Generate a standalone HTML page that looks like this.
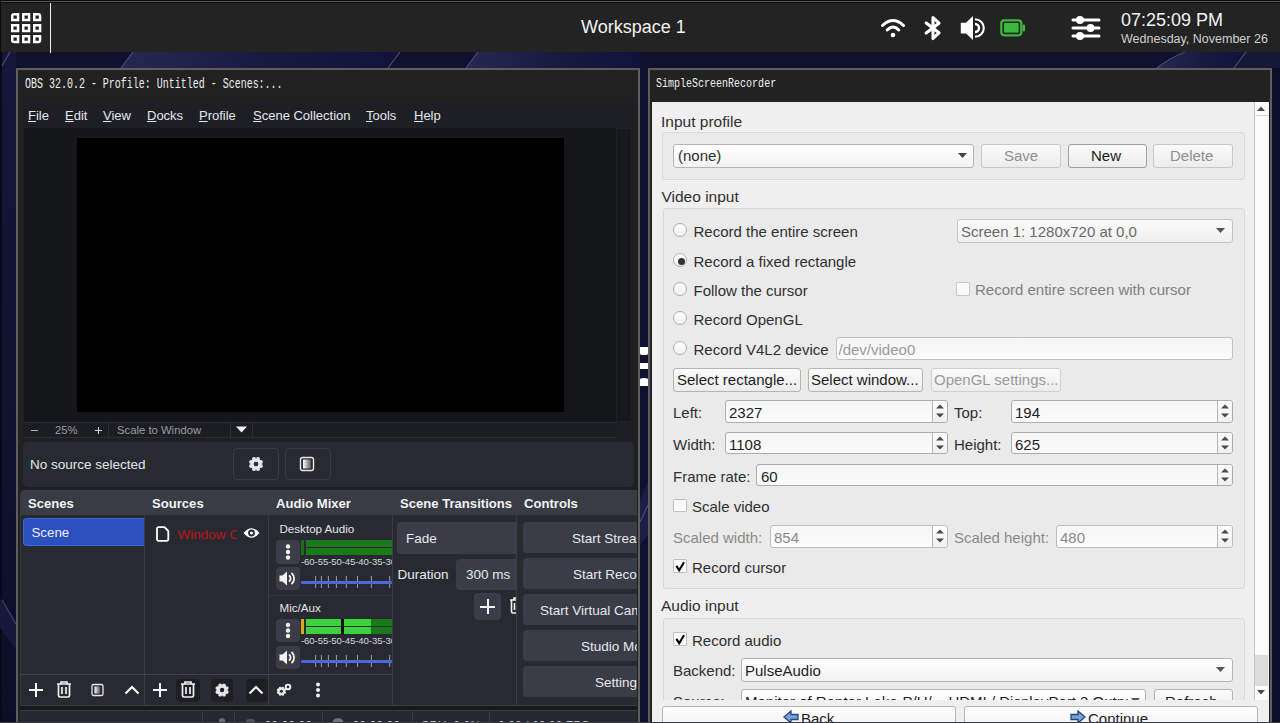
<!DOCTYPE html>
<html><head><meta charset="utf-8">
<style>
*{box-sizing:border-box;margin:0;padding:0}
html,body{width:1280px;height:723px;overflow:hidden}
body{position:relative;background:#11122f;font-family:"Liberation Sans",sans-serif;}
.a{position:absolute}
.t{position:absolute;white-space:nowrap;line-height:1}
/* top bar */
#topbar{left:0;top:0;width:1280px;height:52px;background:#232323;border-top:1px solid #0a0a0a}
/* windows */
.win{position:absolute;background:#5c5c5c}
.ttl{position:absolute;background:#222222;font-family:"Liberation Mono",monospace;color:#f0f0f0}
/* OBS */
.obs{color:#e8e8ea}
.btn{position:absolute;background:#3b3d48;border-radius:4px}
/* SSR */
.ssr{color:#303030;font-family:"Liberation Sans",sans-serif}
.grp{position:absolute;background:#eaeaea;border:1px solid #d8d8d8;border-radius:3px}
.fld{position:absolute;background:linear-gradient(#f6f6f6,#fbfbfb);border:1px solid #adadad;border-radius:3px}
.pb{position:absolute;background:linear-gradient(#fbfbfb,#ececec);border:1px solid #b4b4b4;border-radius:3px}
.rad{position:absolute;width:14px;height:14px;border-radius:50%;border:1px solid #b0b0b0;background:linear-gradient(#fdfdfd,#f0f0f0)}
.cb{position:absolute;width:14px;height:13.5px;border:1px solid #c0c0c0;background:#fafafa;border-radius:1px}
.ck{position:absolute;left:1px;top:-3px;font-size:14px;font-weight:bold;color:#111;line-height:1}
.spn{position:absolute;background:linear-gradient(#f6f6f6,#fbfbfb);border:1px solid #adadad;border-radius:3px}
.spn::after{content:"";position:absolute;right:0;top:0;width:14px;height:100%;border-left:1px solid #b8b8b8;background:linear-gradient(#fdfdfd,#f0f0f0);border-radius:0 3px 3px 0;z-index:0}
.spn svg{z-index:1}
</style></head>
<body>
<!-- desktop background streaks -->
<svg class="a" style="left:0;top:0" width="1280" height="723">
  <defs>
    <linearGradient id="pg" x1="0" x2="1" y1="0" y2="0">
      <stop offset="0" stop-color="#262852"/><stop offset="0.5" stop-color="#191a40"/><stop offset="1" stop-color="#12133a"/>
    </linearGradient>
    <linearGradient id="lg" x1="0" x2="0" y1="0" y2="1">
      <stop offset="0" stop-color="#16173a"/><stop offset="0.6" stop-color="#10112e"/><stop offset="1" stop-color="#0c0d26"/>
    </linearGradient>
  </defs>
  <rect x="0" y="0" width="1280" height="723" fill="#10112e"/>
  <rect x="0" y="52" width="16" height="671" fill="url(#lg)"/>
  <rect x="0" y="52" width="2" height="671" fill="#07081a"/>
  <polygon points="133,52 400,52 388,68 121,68" fill="url(#pg)"/>
  <polygon points="478,52 640,52 640,68 466,68" fill="url(#pg)"/>
  <polygon points="1185,52 1246,52 1234,68 1157,68" fill="url(#pg)"/>
  <polygon points="1246,52 1280,52 1280,68 1234,68" fill="#161838"/>
  <path d="M133,52L121,68M400,52L388,68M478,52L466,68M1185,52Q1170,58 1157,68M1246,52L1234,68M10,52L2,66" stroke="#4a4c7a" stroke-width="1.2" fill="none"/>
  <polygon points="0,598 16,624 16,650 0,628" fill="#17183c"/>
  <path d="M2,600L16,624" stroke="#3e406c" stroke-width="1.3"/>
  <polygon points="640,500 648,482 648,535 640,545" fill="#1c1d45"/>
  <path d="M640,522L648,505" stroke="#45477a" stroke-width="1.3"/>
  <rect x="1272" y="68" width="8" height="655" fill="#0d0e28"/>
</svg>
<!-- resize handle -->
<!-- TOP BAR -->
<div id="topbar" class="a" style="border:none">
  <div class="a" style="left:0;top:0;width:1280px;height:1px;background:#0a0a0a"></div>
  <div class="a" style="left:0;top:1px;width:1280px;height:1px;background:#585858"></div>
  <div class="a" style="left:0;top:2px;width:1280px;height:1px;background:#0a0a0a"></div>
  <div class="a" style="left:0;top:0;width:1px;height:52px;background:#0a0a0a"></div>
  <svg class="a" style="left:10px;top:12px" width="33" height="33" viewBox="0 0 33 33"><g fill="#fff"><path d="M4.3,1H9.3V9.3H1V4.3A3.3,3.3 0 0 1 4.3,1ZM3.5,3.5h3.3v3.3h-3.3z" fill-rule="evenodd"/><path d="M12,1H20.3V9.3H12V1ZM14.5,3.5h3.3v3.3h-3.3z" fill-rule="evenodd"/><path d="M23,1H28.0A3.3,3.3 0 0 1 31.3,4.3V9.3H23V1ZM25.5,3.5h3.3v3.3h-3.3z" fill-rule="evenodd"/><path d="M1,12H9.3V20.3H1V12ZM3.5,14.5h3.3v3.3h-3.3z" fill-rule="evenodd"/><path d="M12,12H20.3V20.3H12V12ZM14.5,14.5h3.3v3.3h-3.3z" fill-rule="evenodd"/><path d="M23,12H31.3V20.3H23V12ZM25.5,14.5h3.3v3.3h-3.3z" fill-rule="evenodd"/><path d="M1,23H9.3V31.3H4.3A3.3,3.3 0 0 1 1,28.0V23ZM3.5,25.5h3.3v3.3h-3.3z" fill-rule="evenodd"/><path d="M12,23H20.3V31.3H12V23ZM14.5,25.5h3.3v3.3h-3.3z" fill-rule="evenodd"/><path d="M23,23H31.3V28.0A3.3,3.3 0 0 1 28.0,31.3H23V23ZM25.5,25.5h3.3v3.3h-3.3z" fill-rule="evenodd"/></g></svg>
  <div class="a" style="left:50px;top:3px;width:1px;height:50px;background:#f0f0f0"></div>
  <div class="t" id="ws" style="left:581px;top:18px;font-size:18px;color:#f2f2f2">Workspace 1</div>
  <!-- wifi -->
  <svg class="a" style="left:880px;top:17px" width="27" height="21" viewBox="0 0 27 21">
    <g fill="none" stroke="#fff" stroke-width="3" stroke-linecap="round">
      <path d="M2.5,8.5 Q13,-1.5 23.5,8.5"/>
      <path d="M7.2,13 Q13,7 18.8,13"/>
    </g>
    <circle cx="13" cy="18" r="2.3" fill="#fff"/>
  </svg>
  <!-- bluetooth -->
  <svg class="a" style="left:923px;top:15px" width="20" height="26" viewBox="0 0 20 26">
    <path d="M3.2,8 L16,17.8 L10,23.5 L10,2.5 L16,8.2 L3.2,18" fill="none" stroke="#fff" stroke-width="3.1" stroke-linecap="round" stroke-linejoin="round"/>
  </svg>
  <!-- speaker -->
  <svg class="a" style="left:959px;top:15px" width="28" height="26" viewBox="0 0 28 26">
    <path d="M1.8,7.7 H7 L14,1 V25 L7,18.4 H1.8 Z" fill="#fff"/>
    <path d="M16,9 A4,4 0 0 1 16,17" fill="none" stroke="#fff" stroke-width="2.4"/>
    <path d="M16,4.2 A8.8,8.8 0 0 1 16,21.8" fill="none" stroke="#fff" stroke-width="2.1"/>
  </svg>
  <!-- battery -->
  <svg class="a" style="left:1000px;top:19px" width="26" height="18" viewBox="0 0 26 18">
    <rect x="1.3" y="1.3" width="20" height="15" rx="3" fill="none" stroke="#3cb83c" stroke-width="2.2"/>
    <rect x="4" y="4" width="14.6" height="9.6" fill="#3cb83c"/>
    <rect x="22.5" y="5.5" width="2.5" height="7" rx="1" fill="#3cb83c"/>
  </svg>
  <!-- sliders -->
  <svg class="a" style="left:1071px;top:15px" width="30" height="26" viewBox="0 0 30 26">
    <g stroke="#fff" stroke-width="3" stroke-linecap="round">
      <path d="M2,5 H28"/><path d="M2,13 H28"/><path d="M2,21 H28"/>
    </g>
    <g fill="#fff"><circle cx="9" cy="5" r="4"/><circle cx="19.5" cy="13" r="4"/><circle cx="9" cy="21" r="4"/></g>
  </svg>
  <div class="t" id="clk" style="left:1121px;top:11px;font-size:18px;color:#f2f2f2">07:25:09 PM</div>
  <div class="t" id="dt" style="left:1121px;top:33px;font-size:12.5px;color:#cfcfcf">Wednesday, November 26</div>
</div>
<!-- OBS WINDOW -->
<div class="a" style="left:16px;top:68px;width:624px;height:660px;background:#5e5e5e"></div>
<div class="a" style="left:18px;top:70px;width:620px;height:655px;background:#212121"></div>
<div class="t" id="obst" style="left:25px;top:77px;font-family:'Liberation Mono',monospace;font-size:14px;color:#f0f0f0;transform:scaleX(0.713);transform-origin:0 0">OBS 32.0.2 - Profile: Untitled - Scenes:...</div>
<div class="a" style="left:23px;top:97px;width:614px;height:31px;background:linear-gradient(#212121,#1d1f25 30%,#1d1f25)"></div>
<div class="obs" id="menu" style="position:absolute;left:0;top:0;font-size:13px;color:#e6e6ea">
  <div class="t" style="left:28px;top:109px"><u>F</u>ile</div>
  <div class="t" style="left:65px;top:109px"><u>E</u>dit</div>
  <div class="t" style="left:103px;top:109px"><u>V</u>iew</div>
  <div class="t" style="left:147px;top:109px"><u>D</u>ocks</div>
  <div class="t" style="left:199px;top:109px"><u>P</u>rofile</div>
  <div class="t" style="left:253px;top:109px"><u>S</u>cene Collection</div>
  <div class="t" style="left:366px;top:109px"><u>T</u>ools</div>
  <div class="t" style="left:414px;top:109px"><u>H</u>elp</div>
</div>
<!-- preview -->
<div class="a" style="left:24px;top:128px;width:592px;height:294px;background:#16171b"></div>
<div class="a" style="left:77px;top:138px;width:487px;height:274px;background:#000"></div>
<div class="a" style="left:616px;top:128px;width:16px;height:294px;background:#18191f;border:1px solid #1f2128"></div>
<div class="a" style="left:632px;top:128px;width:5px;height:362px;background:#1d1f25"></div>
<!-- zoom bar -->
<div class="a" style="left:23px;top:422px;width:614px;height:68px;background:#1d1f25"></div>
<div class="a" style="left:23px;top:422px;width:593px;height:16px;background:#1c1d23;border-top:1px solid #2a2b33;border-bottom:1px solid #2a2b33"></div>

<div class="a" style="left:108px;top:422px;width:1px;height:16px;background:#2c2d35"></div>
<div class="a" style="left:230px;top:422px;width:1px;height:16px;background:#2c2d35"></div>
<div class="a" style="left:252px;top:422px;width:1px;height:16px;background:#2c2d35"></div>
<div class="obs" style="position:absolute;left:0;top:0;font-size:11.3px;color:#9a9ba2">
  <div class="a" style="left:30.5px;top:429.5px;width:7px;height:1.3px;background:#b0b1b8"></div>
  <div class="t" style="left:55px;top:425px">25%</div>
  <div class="a" style="left:94.5px;top:429.5px;width:7.5px;height:1.4px;background:#d0d1d6"></div>
  <div class="a" style="left:97.5px;top:426.5px;width:1.4px;height:7.5px;background:#d0d1d6"></div>
  <div class="t" style="left:117px;top:425px">Scale to Window</div>
  <svg class="a" style="left:236px;top:426px" width="11" height="7"><path d="M0,0.5 H11 L5.5,6.5Z" fill="#f0f0f0"/></svg>
</div>
<!-- context bar -->
<div class="a" style="left:23px;top:442px;width:611px;height:45px;background:#272a31;border-radius:5px"></div>
<div class="t" style="left:30px;top:458px;font-size:13.5px;color:#e4e4e8">No source selected</div>
<div class="a" style="left:233px;top:448px;width:46px;height:32px;border:1px solid #3a3c45;border-radius:4px;background:#272a31"></div>
<div class="a" style="left:285px;top:448px;width:46px;height:32px;border:1px solid #3a3c45;border-radius:4px;background:#272a31"></div>
<svg class="a" style="left:0;top:0" width="0" height="0"><defs><g id="gearp"><path d="M0,0" fill="none"/><g fill="#e4e4ea"><circle cx="9" cy="9" r="5.6"/><circle cx="13.90" cy="11.03" r="2"/><circle cx="11.03" cy="13.90" r="2"/><circle cx="6.97" cy="13.90" r="2"/><circle cx="4.10" cy="11.03" r="2"/><circle cx="4.10" cy="6.97" r="2"/><circle cx="6.97" cy="4.10" r="2"/><circle cx="11.03" cy="4.10" r="2"/><circle cx="13.90" cy="6.97" r="2"/></g></g></defs></svg>
<svg class="a" style="left:247px;top:455px" width="18" height="18" viewBox="0 0 18 18">
  <use href="#gearp"/>
  <circle cx="9" cy="9" r="2.3" fill="#272a31"/>
</svg>
<svg class="a" style="left:299px;top:456px" width="16" height="16" viewBox="0 0 16 16">
  <defs><linearGradient id="fg" x1="0" x2="1"><stop offset="0" stop-color="#fff"/><stop offset="1" stop-color="#555"/></linearGradient></defs>
  <rect x="1.5" y="1.5" width="13" height="13" rx="2" fill="none" stroke="#e8e8ea" stroke-width="1.4"/>
  <rect x="4" y="3.5" width="8" height="9" fill="url(#fg)"/>
</svg>
<!-- DOCKS -->
<div class="a" style="left:20px;top:490px;width:617px;height:233px;overflow:hidden">
  <div class="a" style="left:0;top:0;width:617px;height:25px;background:#393b45;border-radius:5px 0 0 0"></div>
  <div class="a" style="left:0;top:25px;width:617px;height:190px;background:#282a32"></div>
  <div class="a" style="left:0;top:25px;width:1px;height:190px;background:#34363f"></div>
  <div class="t" style="left:8px;top:7px;font-size:13.1px;font-weight:bold;color:#f2f2f4">Scenes</div>
  <div class="t" style="left:132px;top:7px;font-size:13.1px;font-weight:bold;color:#f2f2f4">Sources</div>
  <div class="t" style="left:256px;top:7px;font-size:13.1px;font-weight:bold;color:#f2f2f4">Audio Mixer</div>
  <div class="t" style="left:380px;top:7px;font-size:13.1px;font-weight:bold;color:#f2f2f4">Scene Transitions</div>
  <div class="t" style="left:504px;top:7px;font-size:13.1px;font-weight:bold;color:#f2f2f4">Controls</div>
  <!-- dividers -->
  <div class="a" style="left:124px;top:25px;width:1px;height:190px;background:#3a3c46"></div>
  <div class="a" style="left:248px;top:25px;width:1px;height:190px;background:#3a3c46"></div>
  <div class="a" style="left:372px;top:25px;width:1px;height:190px;background:#3a3c46"></div>
  <div class="a" style="left:496px;top:25px;width:1px;height:190px;background:#3a3c46"></div>
  <div class="a" style="left:0;top:184px;width:372px;height:1px;background:#33353d"></div>
  <div class="a" style="left:0;top:215px;width:617px;height:1px;background:#3a3c45"></div>
  <div class="a" style="left:0;top:216px;width:617px;height:4px;background:#17181c"></div>
  <div class="a" style="left:0;top:220px;width:617px;height:13px;background:#272930;border-top:1px solid #3a3c45"></div>
  <div class="a" style="left:182px;top:221px;width:1px;height:12px;background:#3a3c45"></div>
  <div class="a" style="left:214px;top:221px;width:1px;height:12px;background:#3a3c45"></div>
  <div class="a" style="left:302px;top:221px;width:1px;height:12px;background:#3a3c45"></div>
  <div class="a" style="left:392px;top:221px;width:1px;height:12px;background:#3a3c45"></div>
  <div class="a" style="left:469px;top:221px;width:1px;height:12px;background:#3a3c45"></div>
  <div class="a" style="left:199px;top:228px;width:6px;height:6px;background:#6a6c74;border-radius:3px 3px 0 0"></div>
  <div class="a" style="left:226px;top:229px;width:9px;height:5px;background:#50525a;border-radius:3px 3px 0 0"></div>
  <div class="t" style="left:244.6px;top:230px;font-size:12.2px;color:#c0c0c6">00:00:00</div>
  <div class="a" style="left:312px;top:228px;width:11.5px;height:7px;background:#70727a;border-radius:6px 6px 0 0"></div>
  <div class="t" style="left:332.6px;top:230px;font-size:12.2px;color:#c0c0c6">00:00:00</div>
  <div class="t" style="left:400.8px;top:230px;font-size:12.2px;color:#c0c0c6">CPU: 0.0%</div>
  <div class="t" style="left:478px;top:230px;font-size:12.2px;color:#c0c0c6">0.00 / 60.00 FPS</div>

  <!-- scenes list -->
  <div class="a" style="left:3px;top:28px;width:121px;height:28px;background:#2b4fbf;border-radius:4px 0 0 4px;border:1px solid #4266d4;border-right:none"></div>
  <div class="t" style="left:11.5px;top:36px;font-size:13.3px;color:#eef0ff">Scene</div>
  <!-- sources -->
  <svg class="a" style="left:136px;top:36px" width="14" height="16" viewBox="0 0 14 16">
    <path d="M2.5,1.2 H8.5 L12.3,5 V13.3 A1.5,1.5 0 0 1 10.8,14.8 H2.5 A1.5,1.5 0 0 1 1,13.3 V2.7 A1.5,1.5 0 0 1 2.5,1.2Z" fill="none" stroke="#fff" stroke-width="1.8" stroke-linejoin="round"/>
  </svg>
  <div class="t" style="left:157.5px;top:38px;font-size:13.5px;color:#b8141a;width:59px;overflow:hidden">Window Capture</div>
  <svg class="a" style="left:223px;top:37px" width="17" height="12" viewBox="0 0 17 12">
    <path d="M0.5,6 Q8.5,-3.5 16.5,6 Q8.5,15.5 0.5,6Z" fill="#fff"/>
    <circle cx="8.5" cy="6" r="3.4" fill="#272930"/><circle cx="8.5" cy="6" r="1.6" fill="#fff"/>
  </svg>
  <!-- audio mixer (clipped) -->
  <div class="a" style="left:249px;top:25px;width:123px;height:190px;overflow:hidden">
    <div class="a" style="left:-249px;top:-25px;width:617px;height:233px">
  <div class="t" style="left:259.5px;top:33px;font-size:11.6px;color:#e4e4e8">Desktop Audio</div>
  <div class="a" style="left:256px;top:50px;width:24px;height:24px;background:#3a3c47;border-radius:4px"></div>
  <div class="a" style="left:256px;top:77px;width:24px;height:23px;background:#3a3c47;border-radius:4px"></div>
  <div class="a" style="left:281px;top:50px;width:3px;height:15px;background:#1c6e1c"></div>
  <div class="a" style="left:286px;top:50px;width:86px;height:7px;background:#1a7a1a"></div>
  <div class="a" style="left:286px;top:58px;width:86px;height:7px;background:#1a7a1a"></div>
  <div class="t" style="left:281px;top:67px;font-size:9.6px;color:#d8d8dc;letter-spacing:-0.1px">-60-55-50-45-40-35-30</div>
  <div class="a" style="left:281px;top:90.5px;width:91px;height:3.5px;background:#4a69d8;border-radius:2px"></div>
  <div class="a" style="left:249px;top:105px;width:123px;height:1px;background:#33353d"></div>
  <div class="t" style="left:259.5px;top:112px;font-size:11.6px;color:#e4e4e8">Mic/Aux</div>
  <div class="a" style="left:256px;top:129px;width:24px;height:23px;background:#3a3c47;border-radius:4px"></div>
  <div class="a" style="left:256px;top:156px;width:24px;height:23px;background:#3a3c47;border-radius:4px"></div>
  <div class="a" style="left:281px;top:128.5px;width:3px;height:15.5px;background:#e0a424"></div>
  <div class="a" style="left:285.5px;top:128.5px;width:35.5px;height:7px;background:#3ad43a"></div>
  <div class="a" style="left:285.5px;top:136.5px;width:35.5px;height:7.5px;background:#3ad43a"></div>
  <div class="a" style="left:323.5px;top:128.5px;width:27.5px;height:7px;background:#3ad43a"></div>
  <div class="a" style="left:323.5px;top:136.5px;width:27.5px;height:7.5px;background:#3ad43a"></div>
  <div class="a" style="left:321px;top:128.5px;width:2.5px;height:15.5px;background:#0a0a0a"></div>
  <div class="a" style="left:351px;top:128.5px;width:21px;height:7px;background:#1a7a1a"></div>
  <div class="a" style="left:351px;top:136.5px;width:21px;height:7.5px;background:#1a7a1a"></div>
  <div class="t" style="left:281px;top:146px;font-size:9.6px;color:#d8d8dc;letter-spacing:-0.1px">-60-55-50-45-40-35-30</div>
  <div class="a" style="left:281px;top:169.5px;width:91px;height:3.5px;background:#4a69d8;border-radius:2px"></div>
  <svg class="a" style="left:281px;top:86px" width="91" height="12"><g stroke="#9a9ca6" stroke-width="1"><path d="M14.6,0V12M20.4,0V12M27.4,0V12M35.4,0V12M45.3,0V12M56.5,0V12M70.4,0V12M88.7,0V12"/></g></svg>
  <svg class="a" style="left:281px;top:165px" width="91" height="12"><g stroke="#9a9ca6" stroke-width="1"><path d="M14.6,0V12M20.4,0V12M27.4,0V12M35.4,0V12M45.3,0V12M56.5,0V12M70.4,0V12M88.7,0V12"/></g></svg>
  <div class="a" style="left:281px;top:90.5px;width:91px;height:3.5px;background:#4a69d8;border-radius:2px"></div>
  <div class="a" style="left:281px;top:169.5px;width:91px;height:3.5px;background:#4a69d8;border-radius:2px"></div>
  <svg class="a" style="left:256px;top:50px" width="24" height="24"><g fill="#f0f0f0"><circle cx="12" cy="6.5" r="2.2"/><circle cx="12" cy="12" r="2.2"/><circle cx="12" cy="17.5" r="2.2"/></g></svg>
  <svg class="a" style="left:256px;top:129px" width="24" height="23"><g fill="#f0f0f0"><circle cx="12" cy="6" r="2.2"/><circle cx="12" cy="11.5" r="2.2"/><circle cx="12" cy="17" r="2.2"/></g></svg>
  <svg class="a" style="left:256px;top:77px" width="24" height="23" viewBox="0 0 24 23"><path d="M3.5,8.5H6.5L11,4.5V18.5L6.5,14.5H3.5Z" fill="#f4f4f4"/><path d="M13.5,9A3.5,3.5 0 0 1 13.5,14M16,6.5A7,7 0 0 1 16,16.5" fill="none" stroke="#f4f4f4" stroke-width="1.8" stroke-linecap="round"/></svg>
  <svg class="a" style="left:256px;top:156px" width="24" height="23" viewBox="0 0 24 23"><path d="M3.5,8.5H6.5L11,4.5V18.5L6.5,14.5H3.5Z" fill="#f4f4f4"/><path d="M13.5,9A3.5,3.5 0 0 1 13.5,14M16,6.5A7,7 0 0 1 16,16.5" fill="none" stroke="#f4f4f4" stroke-width="1.8" stroke-linecap="round"/></svg>
    </div>
  </div>
  <!-- transitions (clipped) -->
  <div class="a" style="left:373px;top:25px;width:123px;height:190px;overflow:hidden">
    <div class="a" style="left:-373px;top:-25px;width:617px;height:233px">
  <div class="a" style="left:377px;top:32px;width:130px;height:32px;background:#3a3c47;border-radius:4px"></div>
  <div class="t" style="left:386px;top:42px;font-size:13.5px;color:#e8e8ec">Fade</div>
  <div class="t" style="left:377.5px;top:78px;font-size:13.5px;color:#e8e8ec">Duration</div>
  <div class="a" style="left:435.5px;top:68.5px;width:70px;height:31.5px;background:#3a3c47;border-radius:4px"></div>
  <div class="t" style="left:446px;top:78px;font-size:13.5px;color:#e8e8ec">300 ms</div>
  <div class="a" style="left:454px;top:102.5px;width:26.5px;height:27.5px;background:#3a3c47;border-radius:4px"></div>
  <div class="a" style="left:460px;top:115.5px;width:15px;height:2px;background:#f4f4f4"></div>
  <div class="a" style="left:466.5px;top:109px;width:2px;height:15px;background:#f4f4f4"></div>
  <svg class="a" style="left:489px;top:107px" width="14" height="17" viewBox="0 0 14 17"><path d="M1,3H13M5,3V1H9V3M2.5,3.5V14.5A1.5,1.5 0 0 0 4,16H10A1.5,1.5 0 0 0 11.5,14.5V3.5M5.5,6V13M8.5,6V13" fill="none" stroke="#f0f0f0" stroke-width="1.6"/></svg>
    </div>
  </div>
  <!-- controls (clipped) -->
  <div class="a" style="left:497px;top:25px;width:120px;height:190px;overflow:hidden">
    <div class="a" style="left:-497px;top:-25px;width:617px;height:233px">
  <div class="a" style="left:503px;top:32.4px;width:140px;height:31px;background:#3a3c47;border-radius:4px"></div>
  <div class="a" style="left:503px;top:68px;width:140px;height:31px;background:#3a3c47;border-radius:4px"></div>
  <div class="a" style="left:503px;top:104px;width:140px;height:31px;background:#3a3c47;border-radius:4px"></div>
  <div class="a" style="left:503px;top:140px;width:140px;height:31px;background:#3a3c47;border-radius:4px"></div>
  <div class="a" style="left:503px;top:176px;width:140px;height:31px;background:#3a3c47;border-radius:4px"></div>
  <div class="t" style="left:552px;top:42px;font-size:13.5px;color:#e8e8ec">Start Streaming</div>
  <div class="t" style="left:553px;top:78px;font-size:13.5px;color:#e8e8ec">Start Recording</div>
  <div class="t" style="left:520px;top:114px;font-size:13.5px;color:#e8e8ec">Start Virtual Camera</div>
  <div class="t" style="left:561px;top:150px;font-size:13.5px;color:#e8e8ec">Studio Mode</div>
  <div class="t" style="left:575px;top:186px;font-size:13.5px;color:#e8e8ec">Settings</div>
    </div>
  </div>
  <!-- toolbars -->
  <div class="a" style="left:0;top:184px;width:372px;height:1px;background:#40424c"></div>

  <svg class="a" style="left:0;top:185px" width="372" height="30" viewBox="0 0 372 30">
    <g stroke="#f4f4f4" stroke-width="2" fill="none">
      <path d="M9,15H23M16,8V22"/>
      <path d="M133,15H147M140,8V22"/>
      <path d="M105.5,18.5L112,12L118.5,18.5" stroke-width="2.2"/>
      <path d="M229.5,18.5L236,12L242.5,18.5" stroke-width="2.2"/>
    </g>
  </svg>
  <div class="a" style="left:156px;top:189px;width:24px;height:22.5px;background:#1e1f25;border-radius:4px"></div>
  <div class="a" style="left:191px;top:189px;width:22px;height:22.5px;background:#1e1f25;border-radius:4px"></div>
  <div class="a" style="left:225.5px;top:189px;width:22px;height:22.5px;background:#1e1f25;border-radius:4px"></div>
  <svg class="a" style="left:0;top:185px" width="372" height="30" viewBox="0 0 372 30">
    <g stroke="#f4f4f4" stroke-width="2" fill="none">
      <path d="M229.5,18.5L236,12L242.5,18.5" stroke-width="2.2"/>
    </g>
    <g fill="none" stroke="#f0f0f0" stroke-width="1.7">
      <path d="M37,9H51M41,9V7H47V9M38.5,9.5V20.5A1.5,1.5 0 0 0 40,22H48A1.5,1.5 0 0 0 49.5,20.5V9.5M42,12V19M46,12V19"/>
      <path d="M161,9H175M165,9V7H171V9M162.5,9.5V20.5A1.5,1.5 0 0 0 164,22H172A1.5,1.5 0 0 0 173.5,20.5V9.5M166,12V19M170,12V19"/>
    </g>
    <defs><linearGradient id="fg2" x1="0" x2="1"><stop offset="0" stop-color="#fff"/><stop offset="1" stop-color="#444"/></linearGradient></defs>
    <rect x="72" y="9.5" width="11" height="11" rx="1.5" fill="none" stroke="#e8e8ea" stroke-width="1.3"/>
    <rect x="74.5" y="11.5" width="6" height="7" fill="url(#fg2)"/>
    <g transform="translate(193.5,6.5) scale(0.95)"><use href="#gearp"/><circle cx="9" cy="9" r="2.3" fill="#1e1f25"/></g>
    <g transform="translate(255.5,10.3) scale(0.66)"><use href="#gearp"/><circle cx="9" cy="9" r="2.3" fill="#272930"/></g>
    <circle cx="268" cy="11.9" r="2.3" fill="none" stroke="#f4f4f4" stroke-width="1.9"/>
    <g fill="#f0f0f0"><circle cx="298" cy="9.5" r="2"/><circle cx="298" cy="15" r="2"/><circle cx="298" cy="20.5" r="2"/></g>
  </svg>
</div>
<div class="a" style="left:640px;top:347px;width:8px;height:7.5px;background:#fff;border-radius:0 0 40% 40%/0 0 1.5px 1.5px"></div>
<div class="a" style="left:640px;top:363px;width:8px;height:6px;background:#fff"></div>
<div class="a" style="left:640px;top:377.5px;width:8px;height:8.5px;background:#fff;border-radius:40% 40% 0 0/1.5px 1.5px 0 0"></div>
<!-- SSR WINDOW -->
<div class="a" style="left:648px;top:68px;width:624px;height:660px;background:#5e5e5e"></div>
<div class="a" style="left:650px;top:70px;width:620px;height:655px;background:#222222"></div>
<div class="t" id="ssrt" style="left:656px;top:77px;font-family:'Liberation Mono',monospace;font-size:13px;color:#f0f0f0;transform:scaleX(0.77);transform-origin:0 0">SimpleScreenRecorder</div>
<div class="a" style="left:652px;top:102px;width:617px;height:621px;background:#efefef"></div>
<div class="ssr" style="position:absolute;left:0;top:0;font-size:15px">
  <!-- scroll area clip -->
  <div class="a" style="left:652px;top:102px;width:602px;height:598px;overflow:hidden">
    <div class="a" style="left:-652px;top:-102px;width:1280px;height:723px">
      <div class="t" style="left:661px;top:114px;font-size:15.5px">Input profile</div>
      <div class="grp" style="left:662px;top:132px;width:583px;height:48px"></div>
      <div class="pb" style="left:673px;top:143.5px;width:301px;height:24.5px;background:linear-gradient(#ffffff,#f2f2f2)"></div>
      <div class="t" style="left:678px;top:148px">(none)</div>
      <svg class="a" style="left:958px;top:153px" width="9" height="5"><path d="M0,0H9L4.5,5Z" fill="#444"/></svg>
      <div class="pb" style="left:981px;top:143.5px;width:80px;height:24px;border-color:#c8c8c8"></div>
      <div class="t" style="left:1004px;top:148px;color:#8e8e8e">Save</div>
      <div class="pb" style="left:1067.5px;top:143.5px;width:79.5px;height:24px;border-color:#a0a0a0"></div>
      <div class="t" style="left:1091px;top:148px;color:#1a1a1a">New</div>
      <div class="pb" style="left:1153px;top:143.5px;width:79.5px;height:24px;border-color:#c8c8c8"></div>
      <div class="t" style="left:1170px;top:148px;color:#8e8e8e">Delete</div>

      <div class="t" style="left:661.5px;top:189px;font-size:15.5px">Video input</div>
      <div class="grp" style="left:662.5px;top:207.5px;width:582.5px;height:381.5px"></div>
      <div class="rad" style="left:673px;top:223.2px"></div>
      <div class="t" style="left:693.5px;top:224px">Record the entire screen</div>
      <div class="rad" style="left:673px;top:253.2px"><div class="a" style="left:3.5px;top:3.5px;width:7px;height:7px;border-radius:50%;background:#333"></div></div>
      <div class="t" style="left:693.5px;top:254px">Record a fixed rectangle</div>
      <div class="rad" style="left:673px;top:281.7px"></div>
      <div class="t" style="left:693.5px;top:282.5px">Follow the cursor</div>
      <div class="rad" style="left:673px;top:311px"></div>
      <div class="t" style="left:693.5px;top:312px">Record OpenGL</div>
      <div class="rad" style="left:673px;top:341px"></div>
      <div class="t" style="left:693.5px;top:342px">Record V4L2 device</div>

      <div class="pb" style="left:956.5px;top:218.5px;width:276px;height:24px;background:linear-gradient(#fbfbfb,#efefef);border-color:#c4c4c4"></div>
      <div class="t" style="left:961px;top:224px;color:#6a6a6a">Screen 1: 1280x720 at 0,0</div>
      <svg class="a" style="left:1216px;top:228px" width="9" height="5"><path d="M0,0H9L4.5,5Z" fill="#555"/></svg>
      <div class="cb" style="left:956px;top:282.4px;border-color:#c8c8c8"></div>
      <div class="t" style="left:975px;top:281.5px;color:#808080">Record entire screen with cursor</div>

      <div class="fld" style="left:836px;top:337px;width:397px;height:23px;border-color:#c0c0c0"></div>
      <div class="t" style="left:838.5px;top:342px;color:#9a9a9a">/dev/video0</div>

      <div class="pb" style="left:673px;top:367.5px;width:127.5px;height:24px"></div>
      <div class="t" style="left:677px;top:372px;color:#1e1e1e">Select rectangle...</div>
      <div class="pb" style="left:807.5px;top:367.5px;width:115.5px;height:24px"></div>
      <div class="t" style="left:811px;top:372px;color:#1e1e1e">Select window...</div>
      <div class="pb" style="left:930.5px;top:367.5px;width:130.5px;height:24px;border-color:#cfcfcf"></div>
      <div class="t" style="left:934px;top:372px;color:#9a9a9a">OpenGL settings...</div>

      <div class="t" style="left:673px;top:405px">Left:</div>
      <div class="spn" style="left:724.5px;top:400px;width:223px;height:22.5px"><svg class="a" style="right:3px;top:50%;margin-top:-7px" width="8" height="14"><path d="M0,4.5H8L4,0.5Z M0,9.5H8L4,13.5Z" fill="#4a4a4a"/></svg></div>
      <div class="t" style="left:729px;top:405px;color:#1e1e1e">2327</div>
      <div class="t" style="left:954px;top:405px">Top:</div>
      <div class="spn" style="left:1010.5px;top:400px;width:222px;height:22.5px"><svg class="a" style="right:3px;top:50%;margin-top:-7px" width="8" height="14"><path d="M0,4.5H8L4,0.5Z M0,9.5H8L4,13.5Z" fill="#4a4a4a"/></svg></div>
      <div class="t" style="left:1015px;top:405px;color:#1e1e1e">194</div>

      <div class="t" style="left:673px;top:437px">Width:</div>
      <div class="spn" style="left:724.5px;top:431.5px;width:223px;height:22.5px"><svg class="a" style="right:3px;top:50%;margin-top:-7px" width="8" height="14"><path d="M0,4.5H8L4,0.5Z M0,9.5H8L4,13.5Z" fill="#4a4a4a"/></svg></div>
      <div class="t" style="left:729px;top:437px;color:#1e1e1e">1108</div>
      <div class="t" style="left:954px;top:437px">Height:</div>
      <div class="spn" style="left:1010.5px;top:431.5px;width:222px;height:22.5px"><svg class="a" style="right:3px;top:50%;margin-top:-7px" width="8" height="14"><path d="M0,4.5H8L4,0.5Z M0,9.5H8L4,13.5Z" fill="#4a4a4a"/></svg></div>
      <div class="t" style="left:1015px;top:437px;color:#1e1e1e">625</div>

      <div class="t" style="left:673px;top:469px">Frame rate:</div>
      <div class="spn" style="left:756px;top:463.5px;width:477px;height:22.5px"><svg class="a" style="right:3px;top:50%;margin-top:-7px" width="8" height="14"><path d="M0,4.5H8L4,0.5Z M0,9.5H8L4,13.5Z" fill="#4a4a4a"/></svg></div>
      <div class="t" style="left:761px;top:469px;color:#1e1e1e">60</div>

      <div class="cb" style="left:673px;top:498.5px"></div>
      <div class="t" style="left:692px;top:499px">Scale video</div>

      <div class="t" style="left:673px;top:530px;color:#8a8a8a">Scaled width:</div>
      <div class="spn" style="left:769.5px;top:524.5px;width:178px;height:23px;border-color:#bdbdbd"><svg class="a" style="right:3px;top:50%;margin-top:-7px" width="8" height="14"><path d="M0,4.5H8L4,0.5Z M0,9.5H8L4,13.5Z" fill="#4a4a4a"/></svg></div>
      <div class="t" style="left:774px;top:530px;color:#8a8a8a">854</div>
      <div class="t" style="left:954px;top:530px;color:#8a8a8a">Scaled height:</div>
      <div class="spn" style="left:1055.5px;top:524.5px;width:177px;height:23px;border-color:#bdbdbd"><svg class="a" style="right:3px;top:50%;margin-top:-7px" width="8" height="14"><path d="M0,4.5H8L4,0.5Z M0,9.5H8L4,13.5Z" fill="#4a4a4a"/></svg></div>
      <div class="t" style="left:1060px;top:530px;color:#8a8a8a">480</div>

      <div class="cb" style="left:673px;top:559.3px"><svg class="a" style="left:0;top:0" width="13" height="13" viewBox="0 0 13 13"><path d="M2.3,5.8 L5.2,10.2 L10,2.2" fill="none" stroke="#000" stroke-width="2.1" stroke-linejoin="miter"/></svg></div>
      <div class="t" style="left:692px;top:560px">Record cursor</div>

      <div class="t" style="left:661px;top:598px;font-size:15.5px">Audio input</div>
      <div class="grp" style="left:662.5px;top:617.5px;width:582.5px;height:120px"></div>
      <div class="cb" style="left:673px;top:632px"><svg class="a" style="left:0;top:0" width="13" height="13" viewBox="0 0 13 13"><path d="M2.3,5.8 L5.2,10.2 L10,2.2" fill="none" stroke="#000" stroke-width="2.1" stroke-linejoin="miter"/></svg></div>
      <div class="t" style="left:692px;top:633px">Record audio</div>
      <div class="t" style="left:673px;top:663px">Backend:</div>
      <div class="pb" style="left:740.5px;top:657.5px;width:492px;height:24px;background:linear-gradient(#ffffff,#f2f2f2)"></div>
      <div class="t" style="left:745px;top:663px;color:#1e1e1e">PulseAudio</div>
      <svg class="a" style="left:1216px;top:667px" width="9" height="5"><path d="M0,0H9L4.5,5Z" fill="#555"/></svg>
      <div class="t" style="left:673px;top:694px">Source:</div>
      <div class="pb" style="left:740.5px;top:688.5px;width:405.5px;height:24px;background:linear-gradient(#ffffff,#f2f2f2)"></div>
      <div class="t" style="left:745px;top:694px;color:#1e1e1e;width:386px;overflow:hidden">Monitor of Raptor Lake-P/U/... HDMI / DisplayPort 3 Output</div>
      <svg class="a" style="left:1131px;top:698px" width="9" height="5"><path d="M0,0H9L4.5,5Z" fill="#555"/></svg>
      <div class="pb" style="left:1153.5px;top:688.5px;width:79px;height:24px"></div>
      <div class="t" style="left:1165px;top:694px;color:#1e1e1e">Refresh</div>
    </div>
  </div>
  <!-- scrollbar -->
  <div class="a" style="left:1254px;top:102px;width:14px;height:598px;background:#fbfbfb;border-left:1px solid #c4c4c4"></div>
  <div class="a" style="left:1254px;top:115px;width:15px;height:1px;background:#d8d8d8"></div>
  <svg class="a" style="left:1257px;top:106px" width="8" height="5"><path d="M0,5H8L4,0.5Z" fill="#4a4a4a"/></svg>
  <div class="a" style="left:1255px;top:655px;width:13px;height:31px;background:#dcdcdc"></div>
  <svg class="a" style="left:1257px;top:690px" width="8" height="5"><path d="M0,0H8L4,4.5Z" fill="#4a4a4a"/></svg>
  <!-- bottom buttons -->
  <div class="pb" style="left:661.5px;top:706px;width:294.5px;height:24px;background:linear-gradient(#ffffff,#f0f0f0)"></div>
  <div class="pb" style="left:964px;top:706px;width:294px;height:24px;background:linear-gradient(#ffffff,#f0f0f0)"></div>
  <svg class="a" style="left:783px;top:710px" width="16" height="14" viewBox="0 0 16 14"><path d="M1,7 L8,1 V4.5 H15 V9.5 H8 V13Z" fill="#79a2d8" stroke="#24467e" stroke-width="1.3"/></svg>
  <div class="t" style="left:801px;top:711px;color:#1e1e1e">Back</div>
  <svg class="a" style="left:1070px;top:710px" width="16" height="14" viewBox="0 0 16 14"><path d="M15,7 L8,1 V4.5 H1 V9.5 H8 V13Z" fill="#79a2d8" stroke="#24467e" stroke-width="1.3"/></svg>
  <div class="t" style="left:1088px;top:711px;color:#1e1e1e">Continue</div>
</div>
<div class="a" style="left:0;top:722px;width:1280px;height:1px;background:#3c3c48"></div>
</body></html>
